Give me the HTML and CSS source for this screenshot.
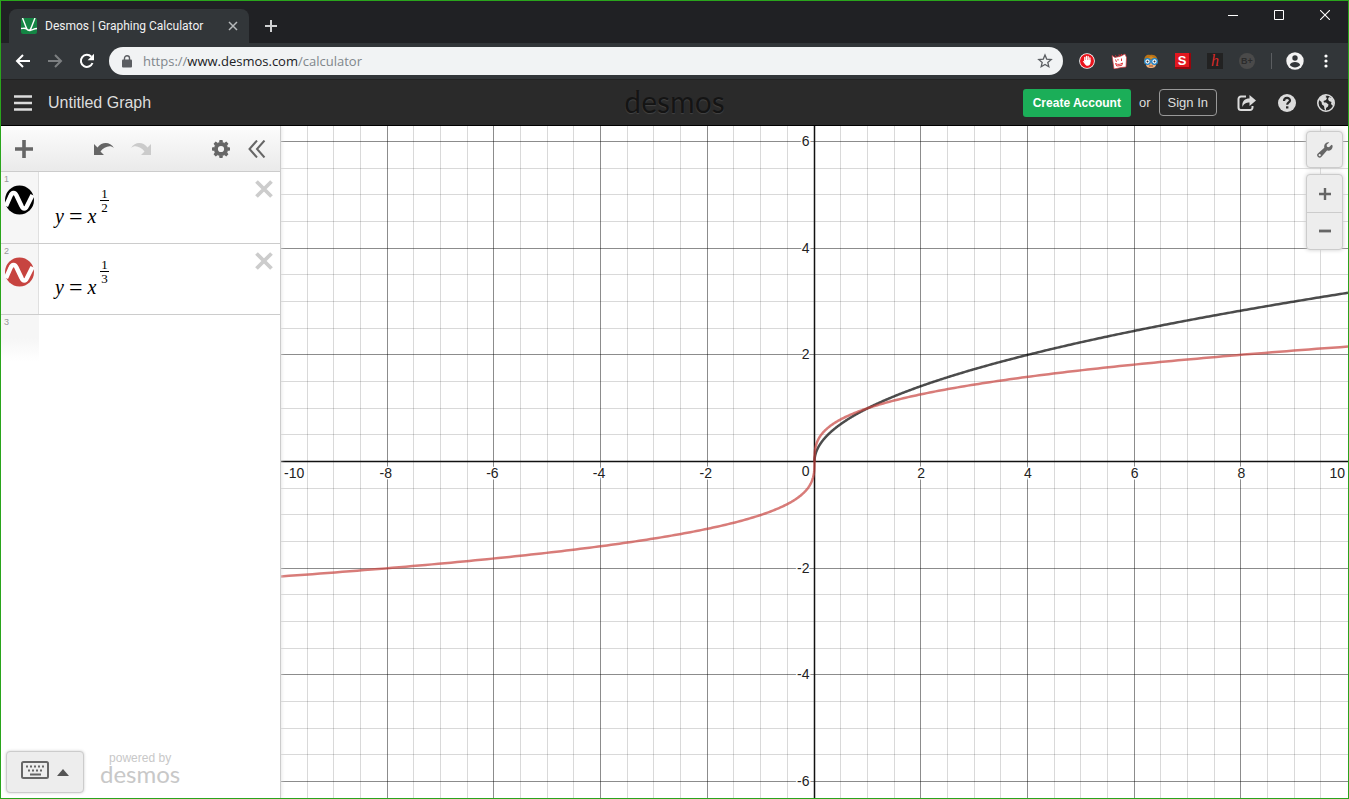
FILE: index.html
```html
<!DOCTYPE html>
<html lang="en">
<head>
<meta charset="utf-8">
<title>Desmos | Graphing Calculator</title>
<link rel="stylesheet" href="styles.css">
</head>
<body>
<div class="window">
  <div class="tabstrip">
    <div class="tab">
      <svg class="favicon" width="16" height="16" viewBox="0 0 16 16"><rect width="16" height="16" rx="2" fill="#148544"/><path d="M1.500 0L5 9C6.500 13.500 9 13.500 10.500 9L14 0M0 10.500C2 10.500 3 10 4.500 10.500C6.500 11 7 13 9 12.500C11.500 12 13 10.500 16 10.500" fill="none" stroke="#fff" stroke-width="1.400"/></svg>
      <span class="tab-title">Desmos | Graphing Calculator</span>
      <button class="tab-close" aria-label="Close tab"><svg width="10" height="10" viewBox="0 0 10 10"><path d="M1 1l8 8M9 1l-8 8" stroke="#b6b9bb" stroke-width="1.500"/></svg></button>
    </div>
    <button class="tab-new" aria-label="New tab"><svg width="12" height="12" viewBox="0 0 12 12"><path d="M6 0v12M0 6h12" stroke="#d0d1d2" stroke-width="2"/></svg></button>
    <div class="window-controls">
      <button aria-label="Minimize"><svg width="10" height="10" viewBox="0 0 10 10"><path d="M0 5.500h10" stroke="#fff"/></svg></button>
      <button aria-label="Maximize"><svg width="10" height="10" viewBox="0 0 10 10"><path d="M.5.5h9v9h-9z" fill="none" stroke="#fff"/></svg></button>
      <button aria-label="Close"><svg width="10" height="10" viewBox="0 0 10 10"><path d="M0 0l10 10M10 0L0 10" stroke="#fff" stroke-width="1.100"/></svg></button>
    </div>
  </div>

  <div class="navbar">
    <div class="nav-buttons">
      <button aria-label="Back"><svg width="16" height="16" viewBox="0 0 16 16"><path d="M15 8H2M8 2L2 8l6 6" fill="none" stroke="#fff" stroke-width="2"/></svg></button>
      <button aria-label="Forward"><svg width="16" height="16" viewBox="0 0 16 16"><path d="M1 8h13M8 2l6 6-6 6" fill="none" stroke="#7c7f81" stroke-width="2"/></svg></button>
      <button aria-label="Reload"><svg width="16" height="16" viewBox="0 0 16 16"><path d="M13.500 10A6 6 0 1 1 12.300 3.800" fill="none" stroke="#fff" stroke-width="2"/><path d="M15 .8v6.400H8.600z" fill="#fff"/></svg></button>
    </div>
    <div class="address">
      <svg width="10" height="13" viewBox="0 0 10 13"><rect x="0" y="4.500" width="10" height="8" rx="1" fill="#5b5e62"/><path d="M2.500 5V3a2.500 2.200 0 0 1 5 0v2" fill="none" stroke="#5b5e62" stroke-width="1.400"/></svg>
      <span class="url">https://<b>www.desmos.com</b>/calculator</span>
      <button aria-label="Bookmark"><svg width="16" height="16" viewBox="0 0 16 16"><path d="M8 2l1.700 4.100 4.500.4-3.400 2.900 1 4.300L8 11.400l-3.800 2.300 1-4.300L1.800 6.500l4.500-.4z" fill="none" stroke="#5b5e62" stroke-width="1.300"/></svg></button>
    </div>
    <div class="extensions">
      <button aria-label="Ad blocker"><svg width="16" height="16" viewBox="0 0 16 16"><circle cx="8" cy="8" r="7.800" fill="#fff"/><circle cx="8" cy="8" r="7" fill="#e8141c"/><path d="M5.800 8V4.500M7.500 7.500V3.300M9.200 7.500V3.600M10.900 8.500V5" stroke="#fff" stroke-width="1.300" stroke-linecap="round"/><path d="M5.200 7h6.300v2.500c0 2-1 3.200-2.800 3.200-1.700 0-2.500-.9-3.600-2.800L3.700 8.200l.9-.3 1 1z" fill="#fff"/></svg></button>
      <button aria-label="Comics"><svg width="16" height="16" viewBox="0 0 16 16"><path d="M1 2.500l3 2L10 3l4-2 1.500 3.500-.5 9.500-5 .5-7 1.500z" fill="#fff" stroke="#d43238" stroke-width=".7"/><path d="M4 2.500l1.500 1M8 1.500L8.500 3.500M10.500 1L10 3M4.500 6.500l1 2.500M10.500 5.500V8M7 6v1.500M4.500 10.500c2.500 1.500 5 1 7-.5l-.8 2.500-5 .5z" fill="none" stroke="#df3237"/></svg></button>
      <button aria-label="Reader"><svg width="16" height="16" viewBox="0 0 16 16"><path d="M1.500 11C0 3 4 1 7 2c5-1 8.500 2 7.500 9z" fill="#b87318"/><path d="M3 7h10v4c0 3-2 4-5 4s-5-1-5-4z" fill="#f1b177"/><path d="M3 6C5 5 7 4 8 3l5 3" fill="#d08a26"/><circle cx="4.500" cy="8.500" r="2.800" fill="#fff" stroke="#1b82cb" stroke-width="1.300"/><circle cx="11.500" cy="8.500" r="2.800" fill="#fff" stroke="#1b82cb" stroke-width="1.300"/><circle cx="4.500" cy="8.500" r="1" fill="#333"/><circle cx="11.500" cy="8.500" r="1" fill="#333"/><path d="M6 13h4" stroke="#8e4939"/></svg></button>
      <button class="ext-s" aria-label="S extension">S</button>
      <button class="ext-h" aria-label="Honey extension">h</button>
      <button class="ext-b" aria-label="B extension">B+</button>
    </div>
    <div class="nav-end">
      <button aria-label="Profile"><svg width="18" height="18" viewBox="0 0 18 18"><circle cx="9" cy="9" r="8.700" fill="#f3f3f3"/><circle cx="9" cy="6" r="2.700" fill="#323639"/><path d="M3.800 13c1-4 9.400-4 10.400 0-2.500 3.200-7.900 3.200-10.400 0z" fill="#323639"/></svg></button>
      <button aria-label="Menu"><svg width="4" height="14" viewBox="0 0 4 14"><g fill="#fff"><circle cx="2" cy="2" r="1.600"/><circle cx="2" cy="7" r="1.600"/><circle cx="2" cy="12" r="1.600"/></g></svg></button>
    </div>
  </div>

  <header class="header">
    <div class="header-left">
      <button aria-label="Open graph menu"><svg width="18" height="16" viewBox="0 0 18 16"><path d="M0 1.500h18M0 8h18M0 14.500h18" stroke="#dcdcdc" stroke-width="2.500"/></svg></button>
      <h1>Untitled Graph</h1>
    </div>
    <div class="brand">desmos</div>
    <div class="header-right">
      <button class="create">Create Account</button>
      <span class="or">or</span>
      <button class="signin">Sign In</button>
      <div class="header-icons">
        <button aria-label="Share"><svg width="20" height="18" viewBox="0 0 20 18"><path d="M9 2.500H4a2.500 2.500 0 0 0-2.500 2.500v8.500A2.500 2.500 0 0 0 4 16h9a2.500 2.500 0 0 0 2.500-2.500V12" fill="none" stroke="#dcdcdc" stroke-width="2"/><path d="M12.500 1L19 6.500 12.500 12V8.500C9 8.500 7 9.500 5.500 13 4.500 7 8 4.500 12.500 4.500z" fill="#dcdcdc"/></svg></button>
        <button aria-label="Help"><svg width="18" height="18" viewBox="0 0 18 18"><circle cx="9" cy="9" r="9" fill="#dcdcdc"/><path d="M6 7c0-4 6-4 6-.5C12 8.500 9.200 8.500 9.200 10.800" fill="none" stroke="#2a2a2a" stroke-width="2.200"/><rect x="8" y="12.300" width="2.400" height="2.200" fill="#2a2a2a"/></svg></button>
        <button aria-label="Language"><svg width="18" height="18" viewBox="0 0 18 18"><circle cx="9" cy="9" r="8.200" fill="none" stroke="#dcdcdc" stroke-width="1.600"/><path d="M3 3.500L7 1l3 .5L8.500 3l1.500 1-1 2-2.500 1 .5 1.500h2l2.500 2-.5 2-2 1.500L9 17l-1.500-2-.5-3-2-1.500L4.500 8 2 6z" fill="#dcdcdc"/><path d="M12 3l3 1 2 4-1 4-2-2 .5-2-2.500-1-1-2z" fill="#dcdcdc"/></svg></button>
      </div>
    </div>
  </header>

  <main class="calculator">
    <aside class="sidebar">
      <div class="toolbar">
        <button class="tool-add" aria-label="Add item"><svg width="18" height="18" viewBox="0 0 18 18"><path d="M9 0v18M0 9h18" stroke="#666" stroke-width="3.600"/></svg></button>
        <div class="tool-history">
          <button aria-label="Undo"><svg width="22" height="14" viewBox="0 0 22 14"><path d="M1 2v11h10L7.500 9.500C11 5 17 2.500 21 6 17-.5 9-.5 4.500 5.500z" fill="#666"/></svg></button>
          <button aria-label="Redo"><svg width="22" height="14" viewBox="0 0 22 14"><path d="M21 2v11H11l3.500-3.500C11 5 5 2.500 1 6 5-.5 13-.5 17.500 5.500z" fill="#cbcbcb"/></svg></button>
        </div>
        <div class="tool-end">
          <button aria-label="Edit list"><svg width="18" height="18" viewBox="-9 -9 18 18"><circle r="5.100" fill="none" stroke="#666" stroke-width="4"/><path d="M-2-6.500L-1.500-9h3L2-6.500zM-2 6.500L-1.500 9h3L2 6.500zM-6.500-2L-9-1.500v3L-6.500 2zM6.500-2L9-1.500v3L6.500 2z" fill="#666"/><path d="M-2-6.500L-1.500-9h3L2-6.500zM-2 6.500L-1.500 9h3L2 6.500zM-6.500-2L-9-1.500v3L-6.500 2zM6.500-2L9-1.500v3L6.500 2z" fill="#666" transform="rotate(45)"/></svg></button>
          <button aria-label="Hide list"><svg width="18" height="18" viewBox="0 0 18 18"><path d="M9 .5L1.500 9 9 17.500M16.500.5L9 9l7.500 8.500" fill="none" stroke="#666" stroke-width="2"/></svg></button>
        </div>
      </div>
      <ol class="expressions">
        <li class="expression">
          <div class="gutter"><span class="index">1</span>
            <button aria-label="Hide curve 1"><svg width="30" height="30" viewBox="0 0 30 30"><circle cx="15.500" cy="15" r="14.500" fill="#000"/><path d="M2 21L6.500 11C8 7 11 7 12.500 10.500L17.500 21C19 24.500 21.500 24.500 23 21L28.500 10" fill="none" stroke="#fff" stroke-width="4.400"/></svg></button></div>
          <div class="math"><i>y</i><span class="eq">=</span><i>x</i><span class="fraction"><span>1</span><span>2</span></span></div>
          <button class="delete" aria-label="Delete expression 1"><svg width="18" height="18" viewBox="0 0 18 18"><path d="M1.500 1.500l15 15M16.500 1.500l-15 15" stroke="#ccc" stroke-width="3.800"/></svg></button>
        </li>
        <li class="expression">
          <div class="gutter"><span class="index">2</span>
            <button aria-label="Hide curve 2"><svg width="30" height="30" viewBox="0 0 30 30"><circle cx="15.500" cy="15" r="14.500" fill="#c74440"/><path d="M2 21L6.500 11C8 7 11 7 12.500 10.500L17.500 21C19 24.500 21.500 24.500 23 21L28.500 10" fill="none" stroke="#fff" stroke-width="4.400"/></svg></button></div>
          <div class="math"><i>y</i><span class="eq">=</span><i>x</i><span class="fraction"><span>1</span><span>3</span></span></div>
          <button class="delete" aria-label="Delete expression 2"><svg width="18" height="18" viewBox="0 0 18 18"><path d="M1.500 1.500l15 15M16.500 1.500l-15 15" stroke="#ccc" stroke-width="3.800"/></svg></button>
        </li>
        <li class="expression empty"><div class="gutter"><span class="index">3</span></div></li>
      </ol>
      <footer class="side-footer">
        <button class="keypad" aria-label="Show keypad">
          <svg width="28" height="18" viewBox="0 0 28 18"><rect x="1" y="1" width="26" height="16" rx="1.500" fill="none" stroke="#666" stroke-width="2"/><path d="M5 5.500h18M7 9.500h14" stroke="#666" stroke-width="2" stroke-dasharray="2 2"/><path d="M9 13.500h11" stroke="#666" stroke-width="2"/></svg>
          <svg width="12" height="7" viewBox="0 0 12 7"><path d="M6 0l6 7H0z" fill="#555"/></svg>
        </button>
        <div class="powered"><span>powered by</span><strong>desmos</strong></div>
      </footer>
    </aside>
    <section class="graph" aria-label="Graph">
      <svg class="plot" role="img" aria-label="y = x^(1/2) and y = x^(1/3)"></svg>
      <div class="graph-controls">
        <button aria-label="Graph settings"><svg width="16" height="16" viewBox="0 0 16 16"><path d="M14.500 2.800L12 5.200l-2-.5-.4-2L12.200.4C9 0 6.500 2.500 7.300 5.800L.9 11.400a2.400 2.400 0 1 0 3.600 3.400L10 8.600c3.500.8 6-2 5.600-5.100zM2.700 12.100a1.100 1.100 0 1 1 0 2.200 1.100 1.100 0 0 1 0-2.200z" fill="#666" fill-rule="evenodd"/></svg></button>
        <div class="zoom">
          <button aria-label="Zoom in"><svg width="12" height="12" viewBox="0 0 12 12"><path d="M6 0v12M0 6h12" stroke="#666" stroke-width="2.400"/></svg></button>
          <button aria-label="Zoom out"><svg width="12" height="12" viewBox="0 0 12 12"><path d="M0 6h12" stroke="#666" stroke-width="2.800"/></svg></button>
        </div>
      </div>
    </section>
  </main>
</div>
<script src="graph.js"></script>
</body>
</html>
```

FILE: styles.css
```css
* { box-sizing: border-box; }
body { margin: 0; font-family: "Liberation Sans", Arial, sans-serif; }
button { display: flex; align-items: center; justify-content: center; margin: 0; padding: 0; border: 0; background: none; font: inherit; color: inherit; cursor: pointer; }
svg { display: block; flex: none; }

.window { display: flex; flex-direction: column; height: 100vh; border: 1px solid #2aa51c; background: #fff; overflow: hidden; }

.tabstrip { display: flex; height: 42px; flex: none; padding: 8px 0 0 8px; background: #202124; }
.tab { display: flex; align-items: center; width: 240px; height: 34px; padding: 0 11px 0 12px; border-radius: 8px 8px 0 0; background: #323639; color: #f1f1f1; }
.tab-title { flex: 1; margin-left: 8px; font: 12px Roboto, sans-serif; white-space: nowrap; }
.tab-new { width: 44px; height: 34px; }
.window-controls { display: flex; margin-left: auto; height: 12px; }
.window-controls button { width: 46px; }

.navbar { display: flex; align-items: center; height: 36px; flex: none; padding: 0 15px 0 14px; background: #323639; }
.nav-buttons { display: flex; gap: 16px; margin-right: 14px; }
.address { display: flex; align-items: center; flex: 1; height: 28px; padding: 0 10px 0 13px; border-radius: 14px; background: #f1f3f4; }
.url { flex: 1; margin-left: 11px; font: 13px "Open Sans", sans-serif; color: #80868b; white-space: nowrap; }
.url b { font-weight: 400; color: #202124; }
.extensions { display: flex; gap: 16px; padding: 0 16px; }
.extensions button { width: 16px; height: 16px; }
.extensions .ext-s { border-right: 2px solid #97060d; border-bottom: 2px solid #97060d; background: #e3171f; color: #fff; font: bold 13px "Liberation Sans", sans-serif; }
.extensions .ext-h { background: #222; color: #d82a2a; font: italic 16px "Liberation Serif", serif; }
.extensions .ext-b { border-radius: 50%; background: #4a4a4a; color: #2c2c2c; font-size: 9px; font-weight: 700; }
.nav-end { display: flex; align-items: center; gap: 20px; padding: 0 5px 0 14px; border-left: 1px solid #5b5e61; height: 16px; }

.header { display: grid; grid-template-columns: 1fr auto 1fr; align-items: center; height: 47px; flex: none; padding: 0 13px; border-top: 1px solid #222; border-bottom: 1px solid #000; background: #2a2a2a; color: #ddd; }
.header-left { display: flex; align-items: center; gap: 16px; }
.header h1 { margin: 0; font-size: 16px; font-weight: 400; }
.brand { padding-bottom: 4px; font: 30px/36px Lato, sans-serif; color: #141414; text-shadow: 0 1px 1px #444; }
.header-right { display: flex; align-items: center; justify-content: flex-end; gap: 8px; font-size: 13px; }
.create { height: 28px; padding: 0 10px; border-radius: 3px; background: #1bae58; color: #fff; font-size: 12px; font-weight: 700; }
.signin { height: 27px; padding: 0 8px; border: 1px solid #999; border-radius: 4px; }
.header-icons { display: flex; gap: 21px; margin-left: 12px; }

.calculator { display: flex; flex: 1; min-height: 0; }
.sidebar { display: flex; flex-direction: column; width: 280px; flex: none; z-index: 1; border-right: 1px solid #ccc; background: #fff; box-shadow: 0 0 4px #ddd; clip-path: inset(0 -4px 0 0); }
.toolbar { display: flex; align-items: center; height: 46px; flex: none; padding: 0 14px; border-bottom: 1px solid #ccc; background: linear-gradient(#fcfcfc, #eaeaea); }
.tool-history { display: flex; gap: 15px; margin-left: 60px; }
.tool-end { display: flex; gap: 18px; margin-left: auto; }

.expressions { flex: 1; margin: 0; padding: 0; list-style: none; }
.expression { display: flex; height: 71px; border-bottom: 1px solid #ccc; }
.expression:first-child { height: 72px; }
.expression.empty { height: 46px; border: 0; }
.gutter { width: 38px; padding: 2px 3px; border-right: 1px solid #e0e0e0; background: #f6f6f6; }
.gutter button { margin-top: 1px; }
.index { display: block; font-size: 9px; line-height: 10px; color: #999; }
.empty .gutter { border: 0; background: linear-gradient(#f6f6f6 50%, #fff); }
.math { display: flex; flex: 1; align-items: flex-end; padding: 0 0 15px 16px; font: 20px/24px "Liberation Serif", serif; color: #000; }
.eq { margin: 0 5px; font-size: 24px; }
.fraction { display: flex; flex-direction: column; margin: 0 0 14px 4px; font-size: 13px; line-height: 13px; text-align: center; }
.fraction span { padding: 0 1px; }
.fraction span:first-child { border-bottom: 1px solid #000; }
.delete { align-self: flex-start; margin: 8px 7px 0 0; }

.side-footer { display: flex; align-items: center; gap: 16px; padding: 0 0 5px 5px; }
.keypad { gap: 8px; width: 78px; height: 42px; padding-bottom: 4px; border: 1px solid #ccc; border-radius: 4px; background: #ededed; box-shadow: 0 0 3px #ccc; }
.keypad svg:last-child { margin-top: 4px; }
.powered { display: flex; flex-direction: column; align-items: center; padding-bottom: 9px; color: #c8c8c8; font-size: 12px; line-height: 12px; }
.powered strong { font: 24px/20px Lato, sans-serif; }

.graph { position: relative; flex: 1; min-width: 0; }
.plot { width: 100%; height: 100%; }
.minor { stroke: #000; stroke-opacity: .15; }
.major { stroke: #000; stroke-opacity: .45; }
.axis { stroke: #111; stroke-width: 1.5; }
.curve { fill: none; stroke-width: 2.5; stroke-opacity: .7; }
.label { font-size: 14px; fill: #222; stroke: #fff; stroke-width: 3; paint-order: stroke; }
.graph-controls { position: absolute; top: 5px; right: 5px; display: flex; flex-direction: column; gap: 6px; }
.graph-controls > button, .zoom { width: 37px; border: 1px solid #ccc; border-radius: 4px; background: #ededed; box-shadow: 0 0 4px #ccc; }
.graph-controls > button { height: 37px; }
.zoom button { width: 100%; height: 37px; }
.zoom button + button { border-top: 1px solid #ccc; }
```

FILE: graph.js
```js
const svg = document.querySelector(".plot");
const NS = "http://www.w3.org/2000/svg";

function add(name, attrs, text) {
  const el = document.createElementNS(NS, name);
  for (const key in attrs) el.setAttribute(key, attrs[key]);
  if (text !== undefined) el.textContent = text;
  svg.appendChild(el);
}

function curve(w, h, unit, power, tMin, color) {
  const limit = Math.pow(10, 1 / power);
  const points = [];
  for (let i = 0; i <= 400; i++) {
    const t = tMin * limit + (limit - tMin * limit) * i / 400;
    points.push((w / 2 + Math.pow(t, power) * unit).toFixed(2) + "," + (h / 2 - t * unit).toFixed(2));
  }
  add("polyline", { class: "curve", points: points.join(" "), stroke: color });
}

function draw() {
  svg.replaceChildren();
  const w = svg.parentNode.clientWidth;
  const h = svg.parentNode.clientHeight;
  const unit = w / 20;
  const snap = v => Math.floor(v) + 0.5;
  const rows = Math.floor(h / unit);

  for (const kind of ["minor", "major"]) {
    for (let i = -19; i <= 19; i++) {
      if (i === 0 || (i % 4 === 0) !== (kind === "major")) continue;
      const x = snap(w / 2 + i * unit / 2 - 0.5);
      add("line", { class: kind, x1: x, x2: x, y1: 0, y2: h });
    }
    for (let i = -rows; i <= rows; i++) {
      if (i === 0 || (i % 4 === 0) !== (kind === "major")) continue;
      const y = snap(h / 2 - i * unit / 2 - 0.5);
      add("line", { class: kind, x1: 0, x2: w, y1: y, y2: y });
    }
  }

  const cx = snap(w / 2), cy = snap(h / 2 - 1);
  add("line", { class: "axis", x1: cx, x2: cx, y1: 0, y2: h });
  add("line", { class: "axis", x1: 0, x2: w, y1: cy, y2: cy });

  for (let n = -10; n <= 10; n += 2) {
    if (n === 0) continue;
    const anchor = n === -10 ? "start" : n === 10 ? "end" : "middle";
    const x = n === -10 ? 3 : n === 10 ? w - 3 : w / 2 + n * unit - (n < 0 ? 2 : 0);
    add("text", { class: "label", x, y: cy + 16, "text-anchor": anchor }, n);
  }
  for (let n = -6; n <= 6; n += 2) {
    const y = n === 0 ? cy + 14 : h / 2 - n * unit + 4;
    add("text", { class: "label", x: cx - 5, y, "text-anchor": "end" }, n);
  }

  curve(w, h - 1, unit, 2, 0, "#000000");
  curve(w, h - 1, unit, 3, -1, "#c74440");
}

draw();
window.addEventListener("resize", draw);
```
